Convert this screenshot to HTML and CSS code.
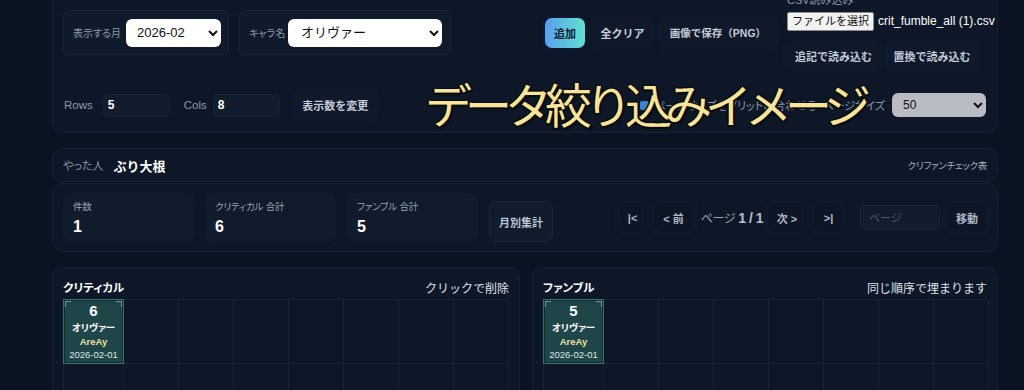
FILE: index.html
```html
<!DOCTYPE html>
<html lang="ja">
<head>
<meta charset="utf-8">
<link rel="stylesheet" href="styles.css">
</head>
<body>
<div class="page">
  <section class="panel top">
    <div class="row1">
      <div class="field">
        <span class="flabel l1">表示する月</span>
        <select class="sel sel-month"><option>2026-02</option></select>
      </div>
      <div class="field">
        <span class="flabel l2">キャラ名</span>
        <select class="sel sel-chara"><option>オリヴァー</option></select>
      </div>
      <div class="actions">
        <button class="btn primary">追加</button>
        <button class="btn">全クリア</button>
        <button class="btn">画像で保存（PNG）</button>
      </div>
      <div class="csv">
        <div class="csv-label">CSV読み込み</div>
        <div class="file">
          <span class="file-btn">ファイルを選択</span>
          <span class="file-name">crit_fumble_all (1).csv</span>
        </div>
        <div class="csv-btns">
          <button class="btn">追記で読み込む</button>
          <button class="btn">置換で読み込む</button>
        </div>
      </div>
    </div>
    <div class="row2">
      <span class="rlabel">Rows</span>
      <input class="num" value="5">
      <span class="rlabel cols">Cols</span>
      <input class="num" value="8">
      <button class="btn resize">表示数を変更</button>
      <div class="fit">
        <span class="check"></span>
        <span class="fit-label">ページサイズをグリッドに合わせる</span>
        <span class="fit-label ps">ページサイズ</span>
        <select class="sel sel-size"><option>50</option></select>
      </div>
    </div>
  </section>

  <section class="panel who">
    <span class="who-label">やった人</span>
    <span class="who-name">ぶり大根</span>
    <span class="who-right">クリファンチェック表</span>
  </section>

  <section class="panel stats">
    <div class="stat"><div class="stat-l">件数</div><div class="stat-v">1</div></div>
    <div class="stat"><div class="stat-l">クリティカル 合計</div><div class="stat-v">6</div></div>
    <div class="stat"><div class="stat-l">ファンブル 合計</div><div class="stat-v">5</div></div>
    <button class="monthly">月別集計</button>
    <div class="pager">
      <button class="pbtn">|&lt;</button>
      <button class="pbtn">&lt; 前</button>
      <span class="pinfo">ページ <b>1 / 1</b></span>
      <button class="pbtn">次 &gt;</button>
      <button class="pbtn gapr">&gt;|</button>
      <input class="pinput" placeholder="ページ">
      <button class="pbtn">移動</button>
    </div>
  </section>

  <div class="boards">
    <section class="panel board">
      <div class="bhead"><span class="btitle">クリティカル</span><span class="bnote">クリックで削除</span></div>
      <div class="grid">
        <div class="cell"><div class="card"><div class="c-n">6</div><div class="c-name">オリヴァー</div><div class="c-who">AreAy</div><div class="c-date">2026-02-01</div></div></div>
        <div class="cell"></div><div class="cell"></div><div class="cell"></div><div class="cell"></div><div class="cell"></div><div class="cell"></div><div class="cell"></div>
        <div class="cell"></div><div class="cell"></div><div class="cell"></div><div class="cell"></div><div class="cell"></div><div class="cell"></div><div class="cell"></div><div class="cell"></div>
      </div>
    </section>
    <section class="panel board">
      <div class="bhead"><span class="btitle">ファンブル</span><span class="bnote">同じ順序で埋まります</span></div>
      <div class="grid">
        <div class="cell"><div class="card"><div class="c-n">5</div><div class="c-name">オリヴァー</div><div class="c-who">AreAy</div><div class="c-date">2026-02-01</div></div></div>
        <div class="cell"></div><div class="cell"></div><div class="cell"></div><div class="cell"></div><div class="cell"></div><div class="cell"></div><div class="cell"></div>
        <div class="cell"></div><div class="cell"></div><div class="cell"></div><div class="cell"></div><div class="cell"></div><div class="cell"></div><div class="cell"></div><div class="cell"></div>
      </div>
    </section>
  </div>
</div>
<div class="overlay">データ絞り込みイメージ</div>
</body>
</html>
```

FILE: styles.css
```css
* { box-sizing: border-box; }
html, body { margin: 0; height: 100%; overflow: hidden; }
body {
  background: #0a1321;
  font-family: "Liberation Sans", "Noto Sans CJK JP", sans-serif;
  color: #c9d3e0;
  position: relative;
}
.page {
  width: 946px;
  margin-left: 52px;
}
button, select, input { font-family: inherit; }
.panel {
  background: #0d1727;
  border: 1px solid #152134;
  border-radius: 10px;
}
.top {
  margin-top: -20px;
  padding: 13px 11px 11px 10px;
  height: 153px;
}
.row1 {
  display: flex;
  align-items: center;
}
.field {
  display: flex;
  align-items: center;
  height: 45px;
  padding: 0 8px 0 9px;
  background: #0f1a2b;
  border: 1px solid #18243a;
  border-radius: 6px;
  margin-right: 10px;
}
.field:first-child { width: 166px; }
.field:nth-child(2) { width: 212px; }
.flabel {
  font-size: 10px;
  font-feature-settings: "palt";
  color: #8e9aab;
  white-space: nowrap;
  flex: none;
}
.flabel.l1 { width: 53px; }
.flabel.l2 { width: 39px; }
.sel {
  flex: none;
  height: 28px;
  border: none;
  border-radius: 6px;
  background: #ffffff;
  color: #111;
  font-size: 13px;
  padding: 0 7px;
}
.sel-month { width: 95px; }
.sel-chara { width: 154px; padding-left: 9px; }
.actions {
  display: flex;
  gap: 7px;
  margin-left: 84px;
}
.btn {
  height: 30px;
  padding: 0 10px;
  border: none;
  border-radius: 7px;
  background: #0f1929;
  color: #c3cdda;
  font-size: 11px;
  font-weight: 700;
  box-shadow: 0 0 6px rgba(30, 50, 80, 0.35);
  white-space: nowrap;
}
.btn.primary {
  width: 40px;
  padding: 0;
  background: linear-gradient(90deg, #5b9ef0, #5fe1d0);
  color: #0c1a2b;
}
.actions .btn:nth-child(2) { width: 61px; padding: 0; }
.actions .btn:nth-child(3) { width: 116px; padding: 0; font-size: 10.5px; }
.csv {
  margin-left: 11px;
  display: flex;
  flex-direction: column;
}
.csv-label {
  font-size: 11px;
  color: #8e9aab;
  line-height: 12px;
  height: 12px;
}
.file {
  display: flex;
  align-items: center;
  margin-top: 6px;
  height: 18px;
  white-space: nowrap;
}
.file-btn {
  height: 19px;
  line-height: 17px;
  padding: 0 4px;
  background: #f2f2f2;
  border: 1px solid #8a8a8a;
  border-radius: 2px;
  color: #111;
  font-size: 11px;
}
.file-name {
  margin-left: 4px;
  font-size: 12px;
  color: #ffffff;
}
.csv-btns {
  display: flex;
  gap: 6px;
  margin-top: 11px;
}
.csv-btns .btn { width: 93px; padding: 0; }
.csv-btns .btn:nth-child(2) { width: 92px; }
.row2 {
  display: flex;
  align-items: center;
  margin-top: 19px;
  height: 30px;
  padding-left: 1px;
}
.rlabel {
  font-size: 11.5px;
  color: #8e9aab;
  margin-right: 10px;
}
.rlabel.cols { margin-left: 14px; margin-right: 6px; }
.num {
  width: 67px;
  height: 23px;
  border: 1px solid #152236;
  border-radius: 5px;
  background: #111d2e;
  color: #ffffff;
  font-weight: 700;
  font-size: 12px;
  padding: 0 4px;
}
.btn.resize { margin-left: 15px; width: 81px; padding: 0; }
.fit {
  margin-left: auto;
  display: flex;
  align-items: center;
}
.check {
  width: 9px;
  height: 9px;
  background: #3b82d6;
  border-radius: 2px;
  margin-right: 5px;
}
.fit-label {
  font-size: 11px;
  font-feature-settings: "palt";
  color: #8e9aab;
}
.fit-label.ps { margin-left: 6px; margin-right: 7px; }
.sel-size {
  width: 94px;
  height: 24px;
  background: #b9bcc3;
  font-size: 12px;
}
.who {
  margin-top: 15px;
  height: 34px;
  display: flex;
  align-items: center;
  padding: 0 10px;
}
.who-label { font-size: 11px; color: #8e9aab; margin-right: 10px; font-feature-settings: "palt"; }
.who-name { font-size: 13px; font-weight: 700; color: #ffffff; }
.who-right { margin-left: auto; font-size: 9.5px; color: #a3aebd; font-feature-settings: "palt"; letter-spacing: -0.3px; }
.stats {
  margin-top: 1px;
  height: 69px;
  display: flex;
  align-items: center;
  padding: 0 10px;
}
.stat {
  width: 131px;
  height: 49px;
  background: #101b2c;
  border-radius: 8px;
  margin-right: 11px;
  padding: 8px 10px 0;
}
.stat-l { font-size: 9.5px; color: #9aa5b5; line-height: 12px; font-feature-settings: "palt"; letter-spacing: -0.2px; }
.stat-v { font-size: 16px; font-weight: 700; color: #ffffff; margin-top: 6px; line-height: 16px; }
.monthly {
  align-self: flex-end;
  margin-bottom: 9px;
  width: 64px;
  height: 41px;
  background: #101b2c;
  border: 1px solid #1c283b;
  border-radius: 8px;
  color: #b9c4d2;
  font-size: 11px;
  font-weight: 700;
}
.pager {
  margin-left: auto;
  display: flex;
  align-items: center;
}
.pbtn {
  height: 29px;
  padding: 0;
  background: #0d1625;
  border: none;
  border-radius: 7px;
  color: #aeb9c8;
  font-size: 11px;
  font-weight: 700;
  box-shadow: 0 0 8px rgba(30, 50, 85, 0.4);
  margin-right: 8px;
}
.pbtn:nth-child(1) { width: 26px; margin-right: 9px; }
.pbtn:nth-child(2) { width: 38px; }
.pbtn:nth-child(4) { width: 38px; margin-left: 5px; margin-right: 9px; }
.pbtn:nth-child(5) { width: 27px; }
.pbtn:last-child { width: 40px; margin-right: 0; }
.pbtn.gapr { margin-right: 18px; }
.pinfo { font-size: 12px; color: #9aa5b5; white-space: nowrap; font-feature-settings: "palt"; letter-spacing: -0.3px; }
.pinfo b { font-size: 14px; color: #b5c0ce; letter-spacing: -0.5px; }
.pinput {
  width: 80px;
  height: 25px;
  margin-right: 7px;
  background: #111c2c;
  border: 1px solid #17233a;
  border-radius: 5px;
  padding: 0 8px;
  font-size: 11px;
  color: #c9d3e0;
}
.pinput::placeholder { color: #4e5a6b; }
.boards {
  display: flex;
  gap: 12px;
  margin-top: 15px;
}
.board {
  height: 160px;
  padding: 7px 10px 0;
}
.board:first-child { width: 468px; }
.board:last-child { width: 466px; }
.bhead {
  display: flex;
  justify-content: space-between;
  align-items: center;
  height: 24px;
}
.btitle { font-size: 11.5px; font-weight: 700; color: #ffffff; font-feature-settings: "palt"; }
.bnote { font-size: 12px; color: #dfe5ee; }
.grid {
  display: grid;
  grid-template-columns: 60px repeat(7, 55px);
  grid-auto-rows: 64px;
  border-top: 1px solid #172535;
  border-left: 1px solid #172535;
}
.cell {
  border-right: 1px solid #172535;
  border-bottom: 1px solid #172535;
  position: relative;
}
.card {
  position: absolute;
  inset: -1px -1px -1px -1px;
  background: #1e4649;
  border: 1px solid #3f6f6d;
  box-shadow: inset 0 0 0 1px #12302f;
  text-align: center;
  color: #ffffff;
  padding-top: 2px;
}
.card::before, .card::after {
  content: "";
  position: absolute;
  width: 5px;
  height: 5px;
  top: 1px;
  border-top: 1px solid #6e9d98;
}
.card::before { left: 1px; border-left: 1px solid #6e9d98; }
.card::after { right: 1px; border-right: 1px solid #6e9d98; }
.c-n { font-size: 15px; font-weight: 700; line-height: 18px; }
.c-name { font-size: 9.5px; font-weight: 700; line-height: 12px; margin-top: 2px; font-feature-settings: "palt"; }
.c-who { font-size: 9.5px; font-weight: 700; color: #e6e2a2; line-height: 12px; margin-top: 2px; }
.c-date { font-size: 9.5px; color: #dfe6ea; line-height: 12px; margin-top: 1px; }
.overlay {
  position: absolute;
  left: 425px;
  top: 68px;
  font-family: "Noto Sans CJK JP", sans-serif;
  font-size: 47px;
  font-weight: 400;
  letter-spacing: -7px;
  line-height: 70px;
  color: #f8e49c;
  text-shadow:
    1.5px 0 0 #0b0b0b, -1.5px 0 0 #0b0b0b, 0 1.5px 0 #0b0b0b, 0 -1.5px 0 #0b0b0b,
    1px 1px 0 #0b0b0b, -1px -1px 0 #0b0b0b, 1px -1px 0 #0b0b0b, -1px 1px 0 #0b0b0b,
    2px 2px 1px rgba(0,0,0,0.5);
  white-space: nowrap;
}
```
